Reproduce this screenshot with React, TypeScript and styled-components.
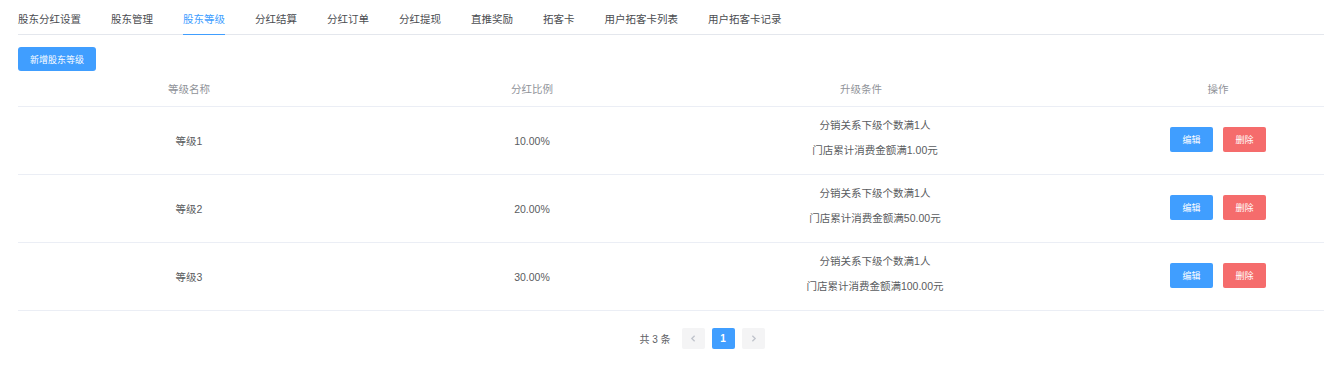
import styled, { createGlobalStyle } from 'styled-components';

type Level = {
  name: string;
  ratio: string;
  members: number;
  amount: string;
};

const levels: Level[] = [
  { name: '等级1', ratio: '10.00%', members: 1, amount: '1.00' },
  { name: '等级2', ratio: '20.00%', members: 1, amount: '50.00' },
  { name: '等级3', ratio: '30.00%', members: 1, amount: '100.00' },
];

const tabs = [
  '股东分红设置',
  '股东管理',
  '股东等级',
  '分红结算',
  '分红订单',
  '分红提现',
  '直推奖励',
  '拓客卡',
  '用户拓客卡列表',
  '用户拓客卡记录',
];

function App() {
  const activeTab = '股东等级';

  return (
    <>
      <GlobalStyle />
      <Page>
        <TabBar>
          {tabs.map((tab) => (
            <Tab key={tab} className={tab === activeTab ? 'active' : ''}>
              {tab}
            </Tab>
          ))}
        </TabBar>

        <AddButton>新增股东等级</AddButton>

        <Table>
          <HeadRow>
            <HeadCell>等级名称</HeadCell>
            <HeadCell>分红比例</HeadCell>
            <HeadCell>升级条件</HeadCell>
            <HeadCell $shift={94}>操作</HeadCell>
          </HeadRow>
          {levels.map((level) => (
            <Row key={level.name}>
              <Cell>{level.name}</Cell>
              <Cell>{level.ratio}</Cell>
              <Cell $shift={28}>
                <Conditions>
                  <span>分销关系下级个数满{level.members}人</span>
                  <span>门店累计消费金额满{level.amount}元</span>
                </Conditions>
              </Cell>
              <Cell $shift={94}>
                <Actions>
                  <SmallButton $variant="primary">编辑</SmallButton>
                  <SmallButton $variant="danger">删除</SmallButton>
                </Actions>
              </Cell>
            </Row>
          ))}
        </Table>

        <Pagination>
          <Total>共 3 条</Total>
          <PageButton disabled>
            <Arrow viewBox="0 0 8 8">
              <path d="M5 1.5 L2.5 4 L5 6.5" />
            </Arrow>
          </PageButton>
          <PageButton $active>1</PageButton>
          <PageButton disabled>
            <Arrow viewBox="0 0 8 8">
              <path d="M3 1.5 L5.5 4 L3 6.5" />
            </Arrow>
          </PageButton>
        </Pagination>
      </Page>
    </>
  );
}

const GlobalStyle = createGlobalStyle`
  html, body {
    margin: 0;
    padding: 0;
    background: #fff;
  }
  body {
    font-family: "Liberation Sans", "Noto Sans CJK SC", sans-serif;
    -webkit-font-smoothing: antialiased;
  }
`;

const Page = styled.div`
  width: 1306px;
  padding: 5px 0 0 18px;
`;

const TabBar = styled.div`
  display: flex;
  height: 29px;
  border-bottom: 1px solid #e4e7ed;
  margin-bottom: 12px;
`;

const Tab = styled.div`
  position: relative;
  padding: 0 15px;
  line-height: 29px;
  font-size: 10.5px;
  color: #4a4c50;
  white-space: nowrap;
  &:first-child {
    padding-left: 0;
  }
  &.active {
    color: #409eff;
  }
  &.active::after {
    content: '';
    position: absolute;
    left: 15px;
    right: 15px;
    bottom: -1px;
    height: 1.5px;
    background: #409eff;
  }
  &.active:first-child::after {
    left: 0;
  }
`;

const AddButton = styled.button`
  display: block;
  height: 24px;
  width: 78px;
  padding: 0;
  border: none;
  border-radius: 3px;
  background: #409eff;
  color: #fff;
  font-family: inherit;
  font-size: 9px;
`;

const Table = styled.div`
  width: 100%;
`;

const columns = '342px 344px 314px 1fr';

const HeadRow = styled.div`
  display: grid;
  grid-template-columns: ${columns};
  height: 35px;
  border-bottom: 1px solid #ebeef5;
`;

const HeadCell = styled.div<{ $shift?: number }>`
  display: flex;
  align-items: center;
  justify-content: center;
  padding-left: ${(p) => p.$shift ?? 0}px;
  font-size: 10.5px;
  color: #909399;
`;

const Row = styled.div`
  display: grid;
  grid-template-columns: ${columns};
  height: 67px;
  border-bottom: 1px solid #ebeef5;
`;

const Cell = styled.div<{ $shift?: number }>`
  display: flex;
  align-items: center;
  justify-content: center;
  padding-left: ${(p) => p.$shift ?? 0}px;
  font-size: 10.5px;
  color: #5a5c60;
`;

const Conditions = styled.div`
  display: flex;
  flex-direction: column;
  align-items: center;
  gap: 11px;
  line-height: 14px;
  margin-bottom: 6px;
  white-space: nowrap;
`;

const Actions = styled.div`
  display: flex;
  gap: 10px;
  margin-bottom: 2px;
`;

const SmallButton = styled.button<{ $variant: 'primary' | 'danger' }>`
  width: 43px;
  height: 25px;
  padding: 0;
  border: none;
  border-radius: 2px;
  background: ${(p) => (p.$variant === 'primary' ? '#409eff' : '#f56c6c')};
  color: #fff;
  font-family: inherit;
  font-size: 9px;
`;

const Pagination = styled.div`
  display: flex;
  align-items: center;
  justify-content: center;
  gap: 7px;
  margin-top: 17px;
  padding-left: 62px;
`;

const Total = styled.span`
  font-size: 10px;
  color: #606266;
  margin-right: 4px;
`;

const PageButton = styled.button<{ $active?: boolean }>`
  display: flex;
  align-items: center;
  justify-content: center;
  width: 23px;
  height: 21px;
  padding: 0;
  border: none;
  border-radius: 2px;
  background: ${(p) => (p.$active ? '#409eff' : '#f4f4f5')};
  color: ${(p) => (p.$active ? '#fff' : '#c0c4cc')};
  font-family: inherit;
  font-size: 10px;
  font-weight: 700;
`;

const Arrow = styled.svg`
  width: 9px;
  height: 9px;
  fill: none;
  stroke: #c0c4cc;
  stroke-width: 1.2;
`;

export default App;
